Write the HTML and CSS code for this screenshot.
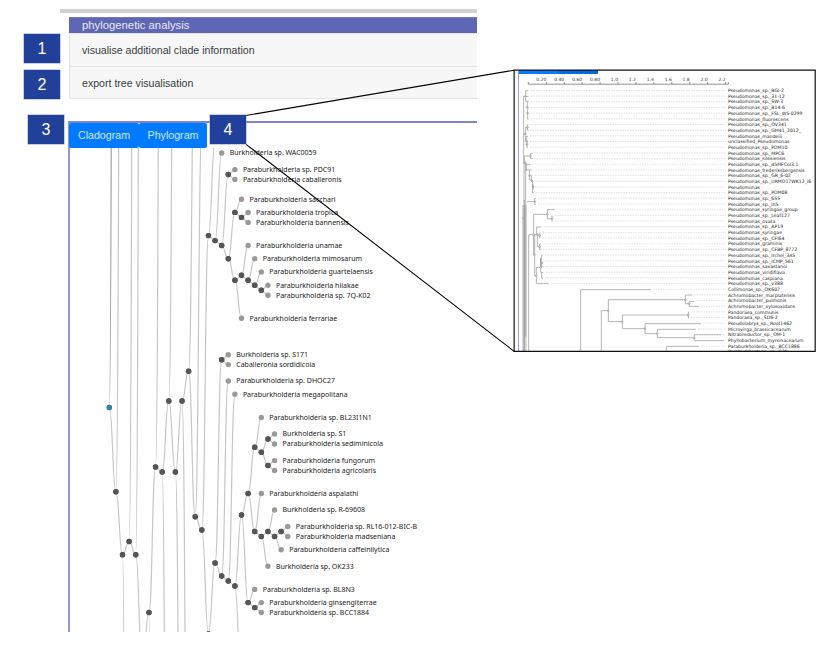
FILE: index.html
```html
<!DOCTYPE html>
<html lang="en">
<head>
<meta charset="utf-8">
<title>Phylogenetic analysis</title>
<link rel="stylesheet" href="styles.css">
</head>
<body>
<main class="figure">
  <div class="rule"></div>
  <section class="panel">
    <h1 class="panel-title">phylogenetic analysis</h1>
    <div class="option"><span class="label">visualise additional clade information</span></div>
    <div class="option"><span class="label">export tree visualisation</span></div>
  </section>
  <section class="tree-view">
    <div class="tabs">
      <button class="tab clado"><span class="label">Cladogram</span></button><button class="tab phylo"><span class="label">Phylogram</span></button>
    </div>
    <svg class="cladogram" viewBox="70 148 407 484"></svg>
  </section>
  <svg class="phylogram" viewBox="513 69 303 283"></svg>
  <svg class="connectors" viewBox="0 0 830 659"><path d="M246 115.5L514 70.2M246 144.3L514 351.3"/></svg>
  <span class="badge one">1</span>
  <span class="badge two">2</span>
  <span class="badge three">3</span>
  <span class="badge four">4</span>
</main>
<script src="tree.js"></script>
</body>
</html>
```
FILE: styles.css
```css
body { margin: 0; background: #fff; font-family: "Liberation Sans", Arial, sans-serif; }
.figure { position: relative; width: 830px; height: 659px; overflow: hidden; padding: 9px 0 0 60px; box-sizing: border-box; }
.rule { width: 417px; height: 4px; background: #d2d2d2; }
.panel { width: 408px; margin: 4px 0 0 9px; }
.panel-title { margin: 0; height: 16px; box-sizing: border-box; border-top: 1px solid #7379c0; padding-left: 13px; background: #5f66b4; color: #e9eaf6; font-size: 11.3px; line-height: 15px; font-weight: 400; }
.option { height: 34px; box-sizing: border-box; border: 1px solid #e3e3e3; border-right: 0; padding-left: 12px; background: #f7f7f7; color: #363a3e; font-size: 10.6px; line-height: 33px; }
.option + .option { height: 32px; border-top: 0; border-radius: 0 0 0 2px; line-height: 32px; }
.tree-view { width: 409px; height: 511px; margin: 22px 0 0 8px; box-sizing: border-box; border-top: 2px solid #8085c8; border-left: 2px solid #9297d0; }
.tabs { display: flex; height: 25px; margin-left: -1px; }
.tab { border: 0; padding: 0; height: 25px; background: #007bff; color: #d4e9ff; font: 10.65px/25px "Liberation Sans", Arial, sans-serif; border-radius: 2px; text-align: center; }
.clado { width: 70px; }
.phylo { width: 68px; }
.cladogram { display: block; width: 407px; height: 484px; }
.cladogram path { fill: none; stroke: #c6c6c6; stroke-width: 1.2; }
.cladogram .spine { stroke: #a2a2a2; }
.cladogram circle { r: 2.7px; fill: #555; }
.cladogram .leaf { fill: #999; }
.cladogram .root { fill: #3182ad; }
.cladogram text { font: 7px "Noto Sans", sans-serif; fill: #222; }
.phylogram { position: absolute; left: 513px; top: 69px; width: 303px; height: 283px; background: #fff; }
.phylogram text { font: 4.6px "DejaVu Sans", sans-serif; fill: #222; }
.phylogram .tick { font-size: 4.5px; text-anchor: end; fill: #333; }
.phylogram .axis { fill: none; stroke: #777; stroke-width: .8; }
.phylogram .dots { stroke: #ccc; stroke-width: .6; stroke-dasharray: 1.5 1; }
.phylogram .branch { fill: none; stroke: #999; stroke-width: 2.2; }
.phylogram .node { fill: #eee; stroke: #888; stroke-width: 1.8; }
.connectors { position: absolute; left: 0; top: 0; width: 830px; height: 659px; pointer-events: none; }
.connectors path { stroke: #000; stroke-width: 1.05; }
.badge { position: absolute; width: 36px; height: 29px; background: #21409a; color: #fff; font-size: 16px; line-height: 30px; text-align: center; box-shadow: 0 0 0 .5px #8da0cf; }
.one { left: 24px; top: 33.5px; }
.two { left: 24px; top: 70px; }
.three { left: 28px; top: 115.3px; line-height: 29px; }
.four { left: 210px; top: 115.3px; line-height: 29px; }
```
FILE: tree.js
```javascript
const NS = 'http://www.w3.org/2000/svg';
function add(parent, tag, attrs, text) {
  const el = document.createElementNS(NS, tag);
  for (const key in attrs) el.setAttribute(key, attrs[key]);
  if (text) el.textContent = text;
  parent.appendChild(el);
  return el;
}

// Cladogram: depth sets the column, y the row.
const clado = document.querySelector('.cladogram');
const col = k => 109.3 + 6.61 * k;
// [depth, y, child y, drawn line class]
const links = [
  [0,407.5,-1300,'spine'],[0,407.5,491.7],[1,491.7,-483],[1,491.7,554.7],[2,554.7,541.5],[2,554.7,1900],
  [3,541.5,-790],[3,541.5,554.7],[4,554.7,-820],[4,554.7,666],[5,666,612.5],[6,612.5,467],[6,612.5,2000],
  [7,467,-520],[7,467,472],[8,472,401],[8,472,1336],[9,401,-275],[9,401,472],[10,472,401],[10,472,1014],
  [11,401,371.3],[11,401,964],[12,371.3,2],[12,371.3,516.7],[13,516.7,130],[13,516.7,530],[14,530,235.6],[14,530,633],
  [15,235.6,140],[15,235.6,240.6],[16,240.6,153],[16,240.6,245.5],[17,245.5,174.5],[17,245.5,258.7],
  [18,174.5,169.6],[18,174.5,179.5],[18,258.7,212.4],[18,258.7,280.3],[19,212.4,199.2],[19,212.4,217.4],
  [20,217.4,212.5],[20,217.4,222.4],[19,280.3,275.3],[19,280.3,318.3],[20,275.3,245.5],[20,275.3,280.3],
  [21,280.3,258.7],[21,280.3,285.3],[22,285.3,272],[22,285.3,290.3],[23,290.3,285.3],[23,290.3,295.2],
  [15,633,563],[15,633,720],[16,563,359.7],[16,563,576],[17,359.7,354.7],[17,359.7,364.6],[17,576,381],[17,576,581],
  [18,581,394.3],[18,581,586],[19,586,515],[19,586,687],[20,515,493.5],[20,515,602.6],
  [21,493.5,447.3],[21,493.5,531.5],[22,447.3,417.5],[22,447.3,452.2],[23,452.2,439],[23,452.2,465.5],
  [24,439,434],[24,439,444],[24,465.5,460.6],[24,465.5,470.5],[22,531.5,493.5],[22,531.5,536.5],
  [23,536.5,531.5],[23,536.5,566.2],[24,531.5,510],[24,531.5,536.5],[25,536.5,531.5],[25,536.5,549.7],
  [26,531.5,526.5],[26,531.5,536.5],[21,602.6,589.4],[21,602.6,607.6],[22,607.6,602.6],[22,607.6,612.5]
];
const leaves = [
  [17,153,'Burkholderia sp. WAC0059'],[19,169.6,'Paraburkholderia sp. PDC91'],[19,179.5,'Paraburkholderia caballeronis'],
  [20,199.2,'Paraburkholderia sacchari'],[21,212.5,'Paraburkholderia tropica'],[21,222.4,'Paraburkholderia bannensis'],
  [21,245.5,'Paraburkholderia unamae'],[22,258.7,'Paraburkholderia mimosarum'],[23,272,'Paraburkholderia guartelaensis'],
  [24,285.3,'Paraburkholderia hiiakae'],[24,295.2,'Paraburkholderia sp. 7Q-K02'],[20,318.3,'Paraburkholderia ferrariae'],
  [18,354.7,'Burkholderia sp. S171'],[18,364.6,'Caballeronia sordidicola'],[18,381,'Paraburkholderia sp. DHOC27'],
  [19,394.3,'Paraburkholderia megapolitana'],[23,417.5,'Paraburkholderia sp. BL23I1N1'],[25,434,'Burkholderia sp. S1'],
  [25,444,'Paraburkholderia sediminicola'],[25,460.6,'Paraburkholderia fungorum'],[25,470.5,'Paraburkholderia agricolaris'],
  [23,493.5,'Paraburkholderia aspalathi'],[25,510,'Burkholderia sp. R-69608'],[27,526.5,'Paraburkholderia sp. RL16-012-BIC-B'],
  [27,536.5,'Paraburkholderia madseniana'],[26,549.7,'Paraburkholderia caffeinilytica'],[24,566.2,'Burkholderia sp. OK233'],
  [22,589.4,'Paraburkholderia sp. BL8N3'],[23,602.6,'Paraburkholderia ginsengiterrae'],[23,612.5,'Paraburkholderia sp. BCC1884']
];
for (const [k, y, y2, cls] of links) {
  const a = col(k), b = col(k + 1), m = (a + b) / 2;
  add(clado, 'path', { d: `M${a} ${y}C${m} ${y} ${m} ${y2} ${b} ${y2}`, class: cls || 'link' });
}
for (const [k, y] of links) add(clado, 'circle', { cx: col(k), cy: y === 633 ? 634 : y, class: k ? 'inner' : 'root' });
for (const [k, y, name] of leaves) {
  add(clado, 'circle', { cx: col(k), cy: y, class: 'leaf' });
  add(clado, 'text', { x: col(k) + 8, y: y + 2.4 }, name);
}

// Phylogram with scale axis and aligned labels.
const phylo = document.querySelector('.phylogram');
add(phylo, 'rect', { x: 519, y: 70, width: 79, height: 4, fill: '#007bff' });
add(phylo, 'rect', { x: 559, y: 70, width: 39, height: 3.4, fill: '#006ad8' });
add(phylo, 'rect', { x: 518, y: 71, width: 1, height: 280, fill: '#9a9edb' });
let axis = 'M528.3 82V84.2H728.4V82';
['0.20','0.40','0.60','0.80','1.0','1.2','1.4','1.6','1.8','2.0','2.2'].forEach((t, i) => {
  const x = 546.3 + 17.93 * i;
  axis += `M${x} 82V84.2`;
  add(phylo, 'text', { x: x, y: 80.6, class: 'tick' }, t);
});
add(phylo, 'path', { d: axis, class: 'axis' });
const P = 'Pseudomonas_';
// [label, x where its branch ends]
const rows = [
  [P+'sp._BGI-2',529],[P+'sp._31-12',529],[P+'sp._SW-3',529],[P+'sp._B14-6',529],[P+'sp._FSL_W5-0299',529],[P+'fluorescens',529],
  [P+'sp._OV341',528],[P+'sp._GM41_2012_',528],[P+'mandelii',528],['unclassified_Pseudomonas',528],[P+'sp._PDM10',528],
  [P+'sp._MPC6',532],[P+'silesiensis',532],[P+'sp._45MFCol3.1',530],[P+'frederiksbergensis',531],[P+'sp._GR_6-02',533],
  [P+'sp._URMO17WK12_I6',533],['Pseudomonas',533],[P+'sp._PDM08',534],[P+'sp._655',536],[P+'sp._In5',536],
  [P+'syringae_group',555],[P+'sp._Leaf127',553],[P+'ovata',553],[P+'sp._AP19',542],[P+'syringae',541],[P+'sp._CFI64',541],
  [P+'graminis',542],[P+'sp._CFBP_8772',541],[P+'sp._Irchel_3A5',543],[P+'sp._ICMP_561',543],[P+'savastanoi',543],
  [P+'viridiflava',544],[P+'caspiana',543],[P+'sp._v388',549],['Collimonas_sp._OK607',651],['Achromobacter_marplatensis',692],
  ['Achromobacter_pulmonis',694],['Achromobacter_xylosoxidans',699],['Pandoraea_communis',689],['Pandoraea_sp._SD6-2',689],
  ['Pseudolabrys_sp._Root1462',701],['Microvirga_brassicacearum',696],['Nitratireductor_sp._OM-1',721],
  ['Phyllobacterium_myrsinacearum',723],['Paraburkholderia_sp._BCC1886',699],['Paraburkholderia_sp._C35',699]
];
rows.forEach(([name, x], i) => {
  const y = 90.4 + 5.68 * i;
  add(phylo, 'path', { d: `M${x + 2} ${y}H726`, class: 'dots' });
  add(phylo, 'text', { x: 728, y: y + 1.7, class: 'tip' }, name);
});
const upper = add(phylo, 'g', { transform: 'translate(505 60) scale(.33333)' });
add(upper, 'path', { class: 'branch', d: 'M70 92H62V124H66M62 109H70M67 124V142M66 124H71M67 142H71M68 142V178M68 160H71M68 177H71M56 109H62M56 109V310M58 222H62M62 202V242M62 202H67V194H70M67 202V211H71M64 228V256M62 242H66V262H69M64 229H69M64 245H69M58 288H77V280H83M77 288V295H84M58 288V310M62 304V330M62 313H77M58 310H64V330H73M73 330V360M73 330H80M73 346H79V365M73 360H82V398H86M82 365H85M82 381H86M84 372V390M62 330V830M66 425H88V416H93M88 425V433H93M57 310V875M58 420V875' });
for (const [x, y] of [[61,109],[66,142],[67,160],[68,202],[60,222],[64,242],[66,254],[77,288],[60,310],[63,330],[74,347],[82,364],[84,381],[90,425]]) add(upper, 'circle', { cx: x, cy: y, r: 2.2, class: 'node' });
const lower = add(phylo, 'g', { transform: 'translate(505 205) scale(.33333)' });
add(lower, 'path', { class: 'branch', d: 'M54 0V440M58 0V440M63 0V440M71 440V89H85M86 149V28H127V14H149M127 28V41H141V32M141 41V50M89 89V212H94V187H107M85 89H95V66H109M95 89H104V82M104 89V100M97 89V125H104V117H108M104 125V134H109M107 187V160H110V151H113M107 160V202H115M110 160V184H115M110 202V220H114M94 212V236H131M227 440V254H438M289 440V317H310V284H541V270H562M310 317V350H352V330H550M352 350V371H420V356H589M420 371V386H457V373H572M457 386V398H568V389H648M568 398V407H657M541 284V296H553V289H568M553 296V304H582M550 320V340M484 440V424H582' });
for (const [x, y] of [[55,40],[127,28],[141,41],[86,89],[97,89],[104,92],[104,125],[88,149],[107,187],[111,174],[94,212],[310,317],[352,350],[420,371],[457,386],[541,284],[553,296],[550,330],[568,398]]) add(lower, 'circle', { cx: x, cy: y, r: 2.6, class: 'node' });
add(phylo, 'path', { d: 'M514.2 70V351.5', stroke: '#555', 'stroke-width': 1.7 });
add(phylo, 'path', { d: 'M513.5 70.2H815.2V351.3H513.5', fill: 'none', stroke: '#111', 'stroke-width': 1.2 });
```
